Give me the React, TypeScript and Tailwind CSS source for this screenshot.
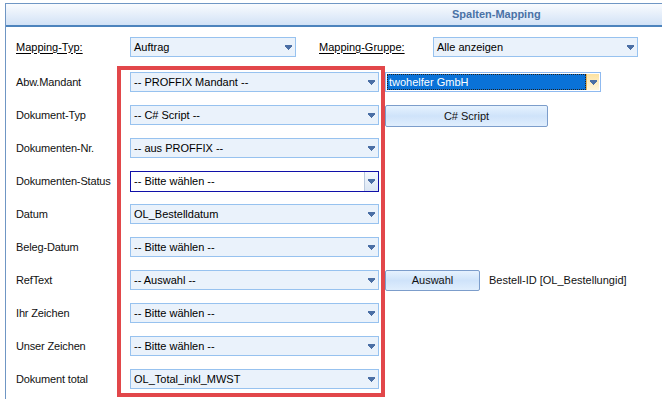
import React from "react";

function Arrow() {
  return (
    <svg width="7" height="5" viewBox="0 0 7 5" shapeRendering="crispEdges" className="shrink-0">
      <rect x="0" y="0" width="7" height="2" fill="#4b6fa5" />
      <rect x="1" y="2" width="5" height="1" fill="#4b6fa5" />
      <rect x="2" y="3" width="3" height="1" fill="#4b6fa5" />
      <rect x="3" y="4" width="1" height="1" fill="#4b6fa5" />
    </svg>
  );
}

function Select({ value, w, focused }: { value: string; w: string; focused?: boolean }) {
  if (focused) {
    return (
      <div className={`${w} h-[21px] flex items-stretch border border-[#1010a8] bg-white`}>
        <div className="flex-1 flex items-center pl-[3px] leading-none">{value}</div>
        <div className="w-[14px] flex items-center justify-center border-l border-[#b9c9de] bg-gradient-to-b from-[#f4f8fd] to-[#dbe6f3]">
          <Arrow />
        </div>
      </div>
    );
  }
  return (
    <div className={`${w} h-[20px] flex items-center justify-between border border-[#97c2ef] bg-[#eaf2fb] pl-[3px] pr-[3px] leading-none`}>
      <span>{value}</span>
      <Arrow />
    </div>
  );
}

function Row({ label, value, children, focused }: { label: string; value: string; children?: React.ReactNode; focused?: boolean }) {
  return (
    <div className="h-[20px] flex items-center">
      <div className="w-[114px] shrink-0 leading-none text-[#111] tracking-[-0.15px] pt-[1px]">{label}</div>
      <Select value={value} w="w-[249px]" focused={focused} />
      {children}
    </div>
  );
}

function Btn({ label, w, h }: { label: string; w: string; h: string }) {
  return (
    <div
      className={`${w} ${h} ml-[6px] self-start flex items-center justify-center rounded-[2px] border border-[#7c9dcb] bg-gradient-to-b from-[#e6f2fe] via-[#cfe3fa] to-[#e0eefd] text-[#111] leading-none`}
    >
      {label}
    </div>
  );
}

export default function App() {
  return (
    <div className="relative w-[662px] h-[399px] bg-white overflow-hidden font-['Liberation_Sans',Arial,sans-serif] text-[11px] text-black">
      <div className="ml-[5px] mt-[3px] h-[396px] border-l border-t border-[#6f96c4]">
        <div className="h-[23px] border-b-2 border-[#4d84bd] bg-gradient-to-b from-[#f9fbfe] to-[#d2e2f6] flex items-center pl-[446px] font-bold text-[#4a72a6] leading-none">
          Spalten-Mapping
        </div>
        <div className="pl-[10px] pt-[10px]">
          <div className="h-[20px] flex items-center">
            <div className="w-[114px] shrink-0 underline underline-offset-2 leading-none">Mapping-Typ:</div>
            <Select value="Auftrag" w="w-[166px]" />
            <div className="ml-[23px] w-[114px] shrink-0 underline underline-offset-2 leading-none">Mapping-Gruppe:</div>
            <Select value="Alle anzeigen" w="w-[205px]" />
          </div>
          <div className="mt-[15px] flex flex-col gap-[13px]">
            <Row label="Abw.Mandant" value="-- PROFFIX Mandant --">
              <div className="ml-[6px] w-[216px] h-[20px] flex items-stretch border border-[#8fbaf0] bg-white p-[1px]">
                <div className="flex-1 flex items-center bg-[#0a72d8] border border-dotted border-[#222] pl-[1px] text-white leading-none">
                  twohelfer GmbH
                </div>
                <div className="w-[13px] flex items-center justify-center border-l border-[#e7b45a] bg-gradient-to-b from-[#fde2a0] to-[#fff6dc]">
                  <Arrow />
                </div>
              </div>
            </Row>
            <Row label="Dokument-Typ" value="-- C# Script --">
              <Btn label="C# Script" w="w-[163px]" h="h-[22px]" />
            </Row>
            <Row label="Dokumenten-Nr." value="-- aus PROFFIX --" />
            <Row label="Dokumenten-Status" value="-- Bitte wählen --" focused />
            <Row label="Datum" value="OL_Bestelldatum" />
            <Row label="Beleg-Datum" value="-- Bitte wählen --" />
            <Row label="RefText" value="-- Auswahl --">
              <Btn label="Auswahl" w="w-[95px]" h="h-[21px]" />
              <div className="ml-[9px] leading-none text-[#111]">Bestell-ID [OL_Bestellungid]</div>
            </Row>
            <Row label="Ihr Zeichen" value="-- Bitte wählen --" />
            <Row label="Unser Zeichen" value="-- Bitte wählen --" />
            <Row label="Dokument total" value="OL_Total_inkl_MWST" />
          </div>
        </div>
      </div>
      <div className="absolute left-[117px] top-[66px] w-[268px] h-[331px] border-4 border-[#e2474a] pointer-events-none" />
    </div>
  );
}
